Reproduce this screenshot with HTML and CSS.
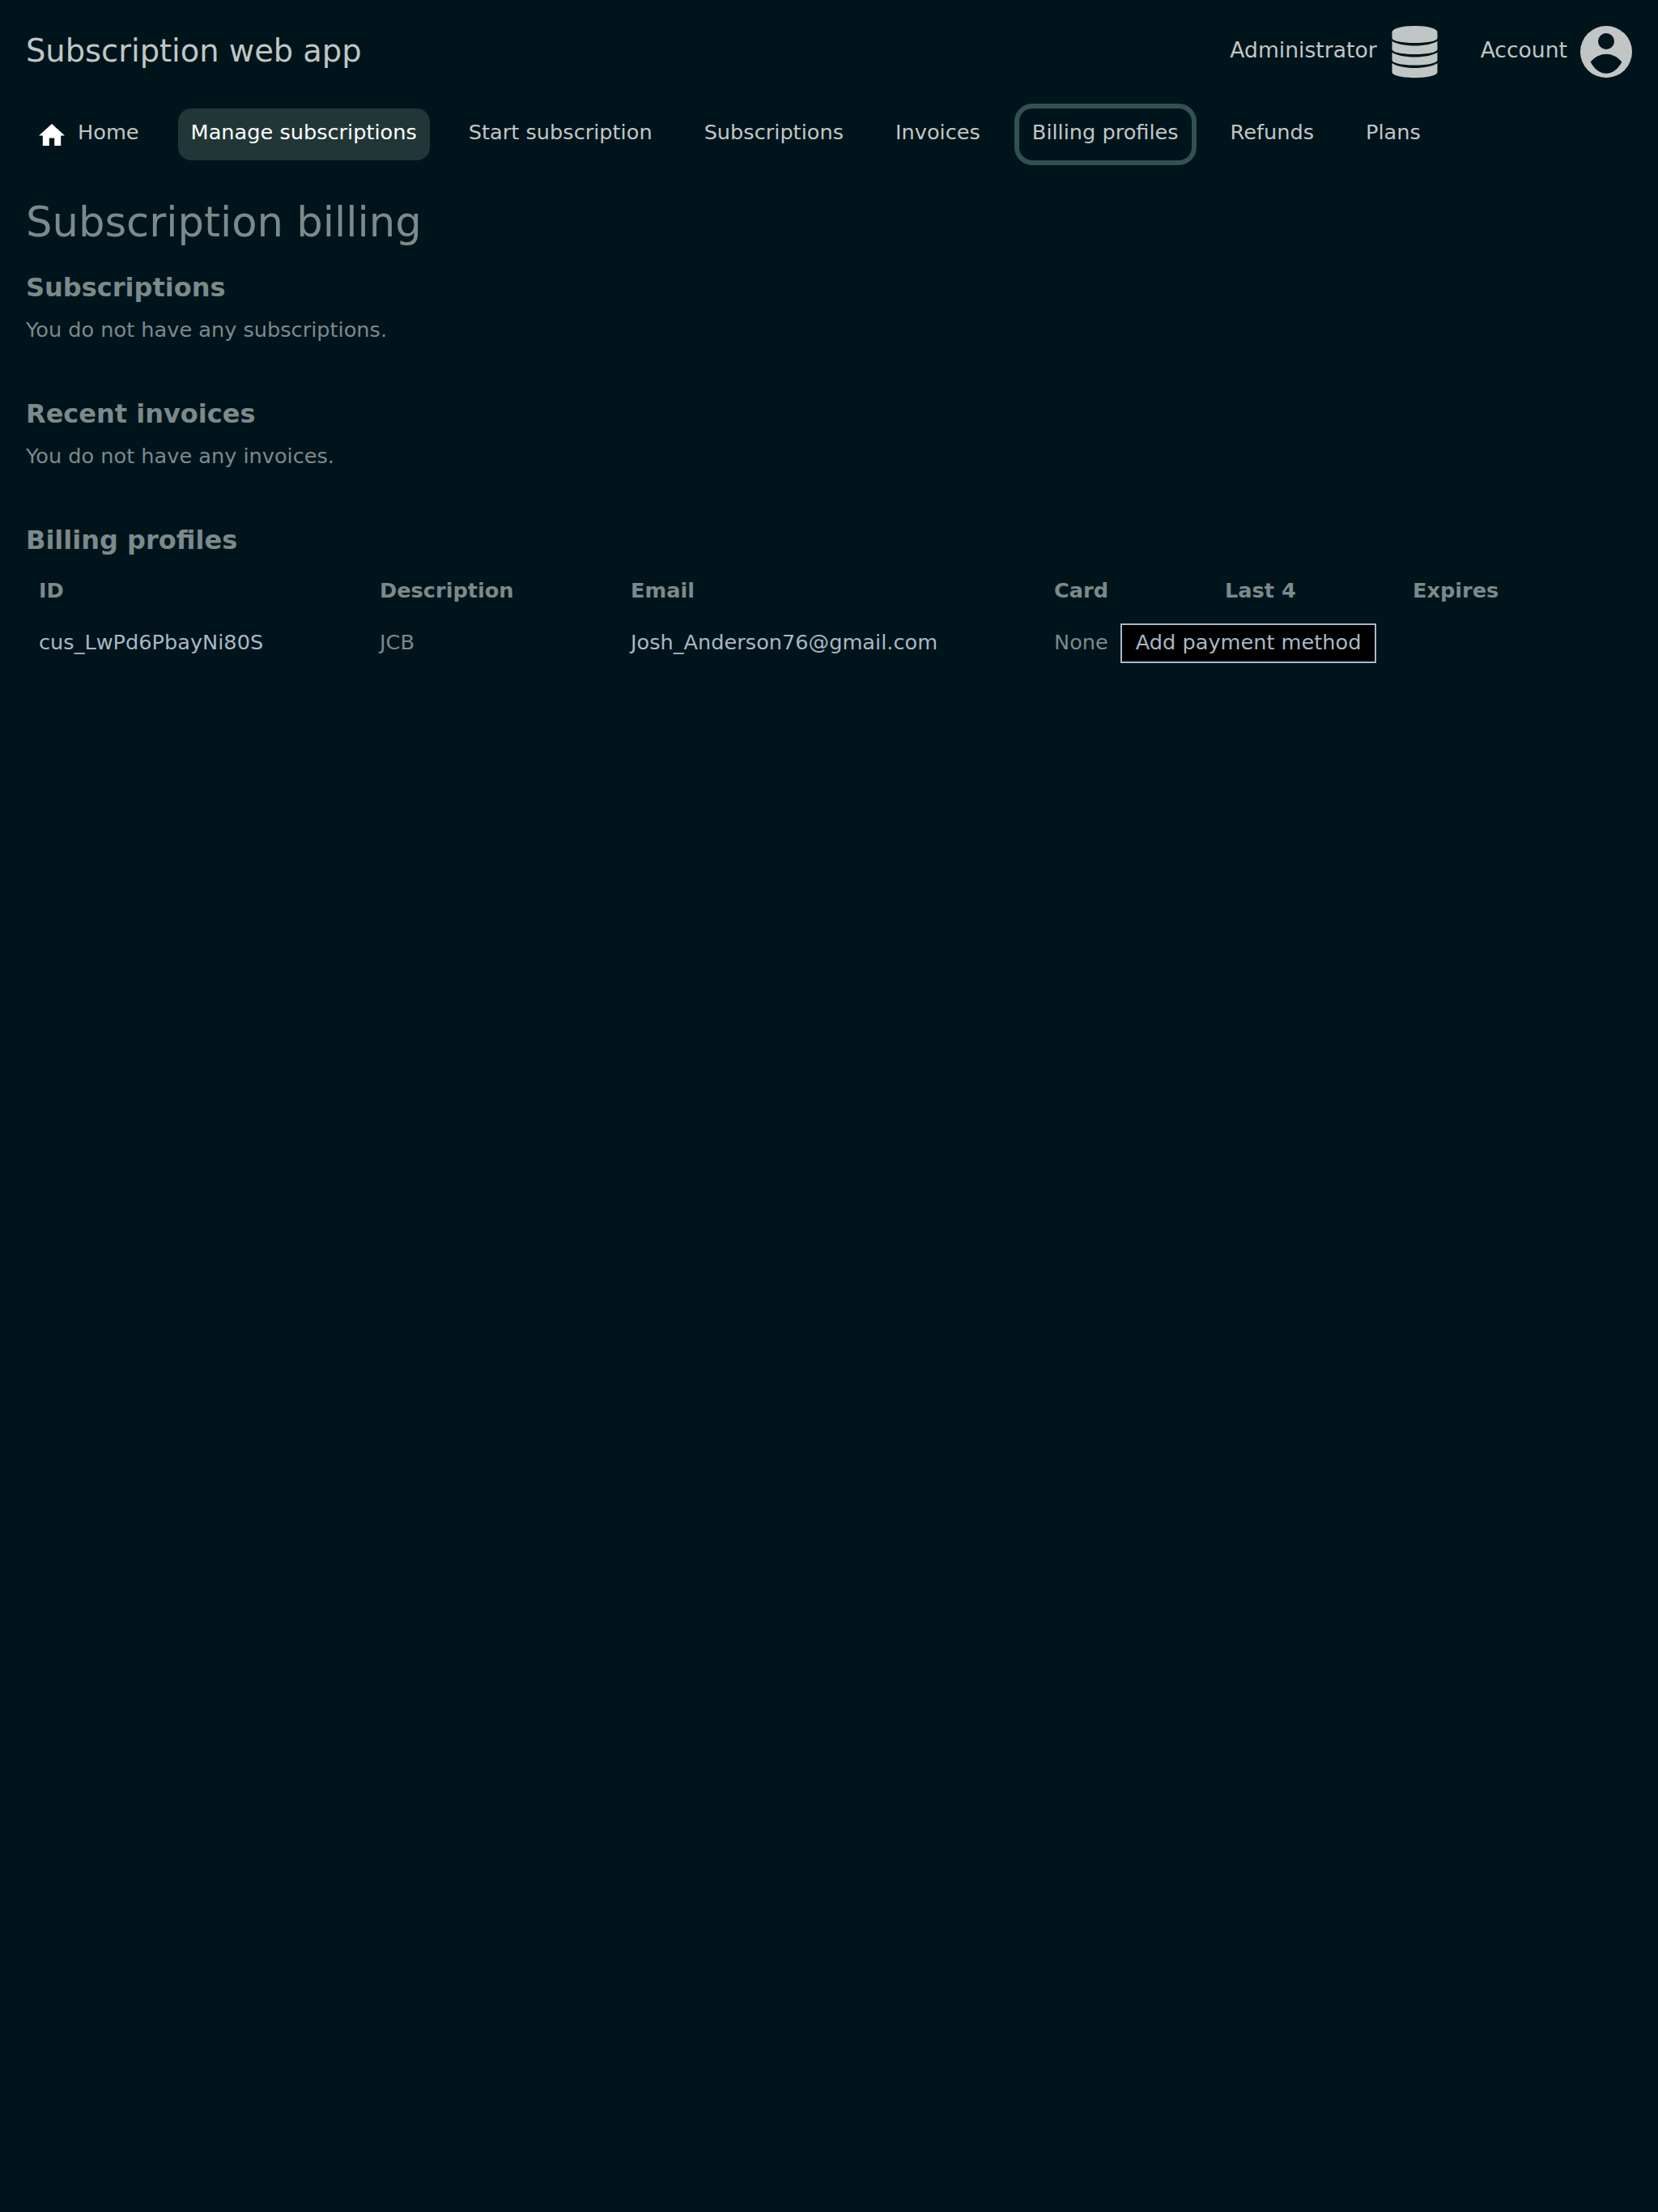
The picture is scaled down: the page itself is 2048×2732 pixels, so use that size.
FILE: index.html
```html
<!DOCTYPE html>
<html lang="en">
<head>
    <meta charset="utf-8">
    <title>Subscription web app</title>
    <link rel="stylesheet" href="styles.css">
</head>
<body>

<!-- Top bar -->
<header class="topbar">
    <div class="brand">Subscription web app</div>
    <div class="user-links">
        <a class="user-link" href="#">
            <span>Administrator</span>
            <svg class="user-icon" viewBox="-2.500 0 64 64">
                <path d="M0 8C0 3 12 0 28 0S56 3 56 8V15C56 18.500 44 21 28 21S0 18.500 0 15Z"/>
                <path d="M0 18.700C5 22 16 24.500 28 24.500S51 22 56 18.700V28.700C56 32.500 44 35 28 35S0 32.500 0 28.700Z"/>
                <path d="M0 32.700C5 36 16 38.500 28 38.500S51 36 56 32.700V42C56 46 44 48.500 28 48.500S0 46 0 42Z"/>
                <path d="M0 46C5 49.500 16 52 28 52S51 49.500 56 46V57C56 61 44 64 28 64S0 61 0 57Z"/>
            </svg>
        </a>
        <a class="user-link" href="#">
            <span>Account</span>
            <svg class="user-icon" viewBox="0 0 64 64"><path fill-rule="evenodd" d="M32 0a32 32 0 1 0 0 64a32 32 0 0 0 0-64zM32 9a10 10 0 1 1 0 20a10 10 0 0 1 0-20zM12.700 44.500C18 38 25 34.700 32 34.700S46 38 51.300 44.500C47 53 40 58.700 32 58.700S17 53 12.700 44.500Z"/></svg>
        </a>
    </div>
</header>

<!-- Main nav -->
<nav class="navbar">
    <a class="nav-item nav-home" href="#">
        <svg class="home-icon" viewBox="2 3 20 17"><path d="M10 20v-6h4v6h5v-8h3L12 3 2 12h3v8z"/></svg>
        <span>Home</span>
    </a>
    <a class="nav-item nav-active" href="#">Manage subscriptions</a>
    <a class="nav-item" href="#">Start subscription</a>
    <a class="nav-item" href="#">Subscriptions</a>
    <a class="nav-item" href="#">Invoices</a>
    <a class="nav-item nav-focus" href="#">Billing profiles</a>
    <a class="nav-item" href="#">Refunds</a>
    <a class="nav-item" href="#">Plans</a>
</nav>

<main class="content">
    <h1>Subscription billing</h1>

    <section class="block">
        <h2>Subscriptions</h2>
        <p>You do not have any subscriptions.</p>
    </section>

    <section class="block">
        <h2>Recent invoices</h2>
        <p>You do not have any invoices.</p>
    </section>

    <section class="block">
        <h2>Billing profiles</h2>
        <table class="profiles">
            <thead>
                <tr>
                    <th class="col-id">ID</th>
                    <th class="col-desc">Description</th>
                    <th class="col-email">Email</th>
                    <th class="col-card">Card</th>
                    <th class="col-last">Last 4</th>
                    <th class="col-exp">Expires</th>
                </tr>
            </thead>
            <tbody>
                <tr>
                    <td class="cell-link">cus_LwPd6PbayNi80S</td>
                    <td>JCB</td>
                    <td class="cell-link">Josh_Anderson76@gmail.com</td>
                    <td class="cell-card" colspan="2">
                        <div class="card-cell">
                            <span>None</span>
                            <button class="add-btn" type="button">Add payment method</button>
                        </div>
                    </td>
                    <td></td>
                </tr>
            </tbody>
        </table>
    </section>
</main>

</body>
</html>
```

FILE: styles.css
```css
html, body {
    background-color: #00141b;
}

body {
    margin: 0;
    min-height: 2732px;
    font-family: "DejaVu Sans", sans-serif;
    font-size: 25.6px;
    color: #7b8a8b;
}

a {
    text-decoration: none;
    color: #c0c6c6;
}

.topbar {
    display: flex;
    justify-content: space-between;
    align-items: center;
    height: 64px;
    padding: 32px 32px 0 32px;
}

.brand {
    font-size: 38.4px;
    padding-bottom: 3px;
    color: #c0c6c6;
}

.user-links {
    display: flex;
    gap: 48px;
}

.user-link {
    display: flex;
    align-items: center;
    gap: 16px;
    font-size: 26.6px;
}

.user-link span {
    padding-bottom: 5px;
}

.user-icon {
    height: 64px;
    width: 64px;
    fill: #c0c6c6;
}

.navbar {
    display: flex;
    gap: 32px;
    height: 64px;
    padding: 38px 32px 0 32px;
}

.nav-item {
    display: flex;
    align-items: center;
    padding: 0 16px 6px 16px;
    border-radius: 16px;
}

.nav-home {
    gap: 16px;
}

.home-icon {
    width: 32px;
    height: 27.2px;
    margin-top: 7px;
    fill: #ffffff;
}

.nav-active {
    background-color: #213636;
    color: #ffffff;
}

.nav-focus {
    outline: 6px solid #325251;
}

.content {
    padding: 0 32px;
}

h1 {
    font-size: 51.2px;
    font-weight: 400;
    margin: 44px 0 27px 0;
    line-height: 64px;
}

h2 {
    font-size: 32px;
    font-weight: 700;
    margin: 0;
    line-height: 44px;
}

p {
    margin: 8px 0 0 0;
    line-height: 44px;
}

.block {
    margin-bottom: 60px;
}

.profiles {
    border-collapse: collapse;
    table-layout: fixed;
    width: 1984px;
    margin-top: 9px;
}

.profiles th {
    box-sizing: border-box;
    text-align: left;
    font-weight: 700;
    padding: 15px 16px 17px 16px;
    line-height: 32px;
}

.profiles td {
    padding: 8px 16px 12px 16px;
    line-height: 32px;
}

.profiles .cell-card {
    padding-bottom: 8px;
}

.col-id { width: 421px; }
.col-desc { width: 310px; }
.col-email { width: 523px; }
.col-card { width: 211px; }
.col-last { width: 232px; }

.cell-link {
    color: #a9b8c4;
}

.card-cell {
    display: flex;
    align-items: center;
    gap: 15px;
}

.card-cell span {
    padding-bottom: 4px;
}

.add-btn {
    height: 49px;
    padding: 0 17px 3px 17px;
    border: 2px solid #a9b8c8;
    background-color: #000000;
    color: #a9b8c4;
    font-family: inherit;
    font-size: 25.6px;
}
```
